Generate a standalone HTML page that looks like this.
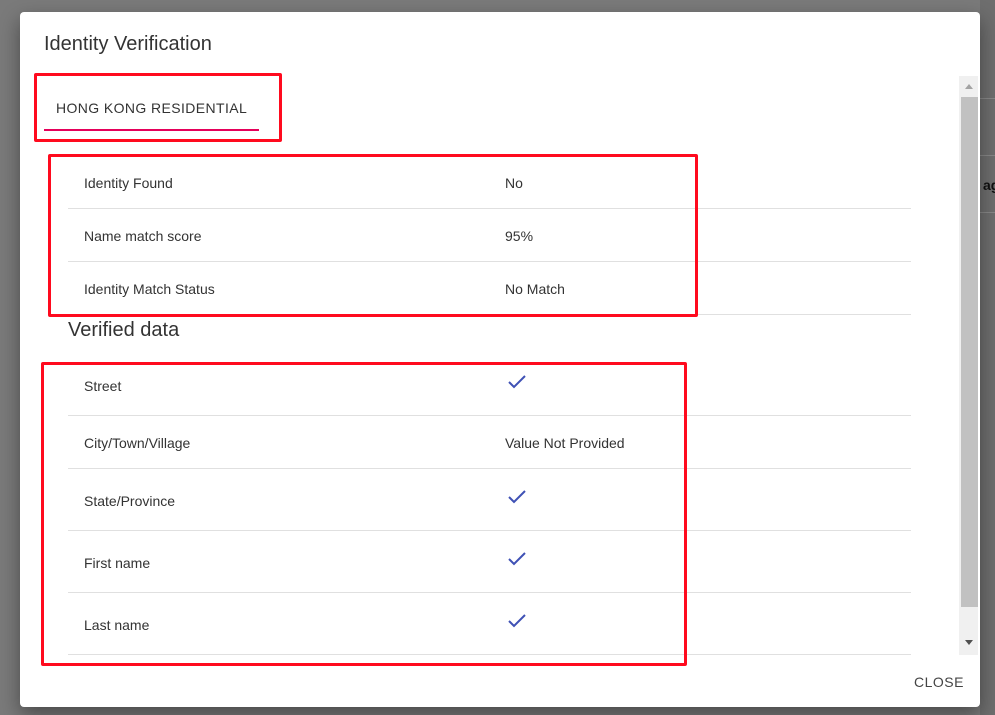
<!DOCTYPE html>
<html><head><style>
body{margin:0;width:995px;height:715px;background:#7a7a7a;position:relative;overflow:hidden;font-family:"Liberation Sans",Arial,sans-serif;}
.a{position:absolute}
.dlg{left:20px;top:12px;width:960px;height:695px;background:#fff;border-radius:4px;box-shadow:0 8px 20px rgba(0,0,0,.4)}
.t{font-size:14px;color:#333;white-space:nowrap}
.line{height:1px;background:#e0e0e0;left:68px;width:843px}
.red{border:3px solid #ff0a1e;border-radius:2px;box-sizing:border-box}
.chk{width:20px;height:14px}
</style></head><body>
<div class="a" style="left:980px;top:0;width:15px;height:715px;background:#6e6e6e"></div>
<div class="a" style="left:980px;top:98px;width:15px;height:1px;background:#888"></div>
<div class="a" style="left:980px;top:155px;width:15px;height:1px;background:#888"></div>
<div class="a" style="left:980px;top:212px;width:15px;height:1px;background:#888"></div>
<div class="a t" style="left:983px;top:177px;color:#111;font-weight:bold">ag</div>
<div class="a dlg"></div>
<div class="a" style="left:44px;top:33px;font-size:20px;color:#333">Identity Verification</div>
<div class="a t" style="left:56px;top:100px;font-size:14px;letter-spacing:.4px;color:#333">HONG KONG RESIDENTIAL</div>
<div class="a" style="left:44px;top:129px;width:215px;height:2px;background:#e5005a"></div>
<div class="a red" style="left:34px;top:73px;width:248px;height:69px"></div>

<div class="a t" style="left:84px;top:175px">Identity Found</div><div class="a t" style="left:505px;top:175px">No</div>
<div class="a line" style="top:208px"></div>
<div class="a t" style="left:84px;top:228px">Name match score</div><div class="a t" style="left:505px;top:228px">95%</div>
<div class="a line" style="top:261px"></div>
<div class="a t" style="left:84px;top:281px">Identity Match Status</div><div class="a t" style="left:505px;top:281px">No Match</div>
<div class="a line" style="top:314px"></div>
<div class="a red" style="left:48px;top:154px;width:650px;height:163px"></div>

<div class="a" style="left:68px;top:319px;font-size:20px;color:#333">Verified data</div>

<div class="a t" style="left:84px;top:378px">Street</div>
<svg class="a chk" style="left:507px;top:375px" viewBox="0 0 20 14"><path d="M2 7l5 5L18 1" stroke="#3f51b5" stroke-width="2" fill="none"/></svg>
<div class="a line" style="top:415px"></div>
<div class="a t" style="left:84px;top:435px">City/Town/Village</div><div class="a t" style="left:505px;top:435px">Value Not Provided</div>
<div class="a line" style="top:468px"></div>
<div class="a t" style="left:84px;top:493px">State/Province</div>
<svg class="a chk" style="left:507px;top:490px" viewBox="0 0 20 14"><path d="M2 7l5 5L18 1" stroke="#3f51b5" stroke-width="2" fill="none"/></svg>
<div class="a line" style="top:530px"></div>
<div class="a t" style="left:84px;top:555px">First name</div>
<svg class="a chk" style="left:507px;top:552px" viewBox="0 0 20 14"><path d="M2 7l5 5L18 1" stroke="#3f51b5" stroke-width="2" fill="none"/></svg>
<div class="a line" style="top:592px"></div>
<div class="a t" style="left:84px;top:617px">Last name</div>
<svg class="a chk" style="left:507px;top:614px" viewBox="0 0 20 14"><path d="M2 7l5 5L18 1" stroke="#3f51b5" stroke-width="2" fill="none"/></svg>
<div class="a line" style="top:654px"></div>
<div class="a red" style="left:41px;top:362px;width:646px;height:304px"></div>

<div class="a" style="left:959px;top:76px;width:19px;height:579px;background:#f0f0f0"></div>
<div class="a" style="left:961px;top:97px;width:17px;height:510px;background:#c1c1c1"></div>
<div class="a" style="left:965px;top:84px;width:0;height:0;border-left:4px solid transparent;border-right:4px solid transparent;border-bottom:5px solid #a3a3a3"></div>
<div class="a" style="left:965px;top:640px;width:0;height:0;border-left:4px solid transparent;border-right:4px solid transparent;border-top:5px solid #505050"></div>

<div class="a t" style="left:914px;top:674px;letter-spacing:.5px;color:#444">CLOSE</div>
</body></html>
